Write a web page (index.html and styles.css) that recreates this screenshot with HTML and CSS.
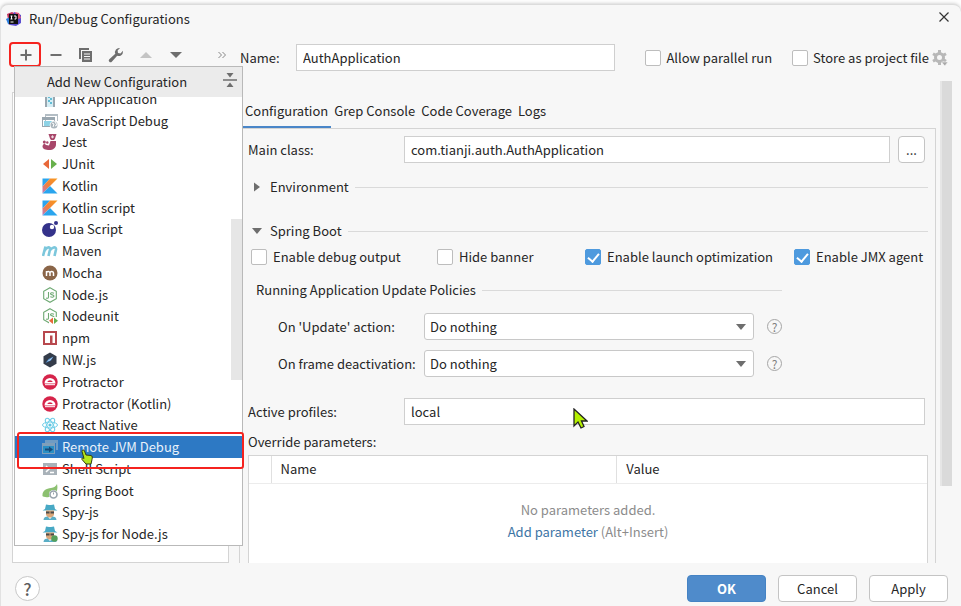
FILE: index.html
```html
<!DOCTYPE html>
<html lang="en">
<head>
<meta charset="utf-8">
<title>Run/Debug Configurations</title>
<link rel="stylesheet" href="styles.css">
</head>
<body>
<div class="dialog">
  <header class="titlebar">
    <svg class="logo" viewBox="0 0 16 16" width="16" height="16" aria-hidden="true">
      <path d="M1 3l5-2 4 2-2 8-5 3z" fill="#c4325e"/><path d="M0 8l4-2 2 8-4-1z" fill="#2b7de0"/><path d="M8 1l7 3v8l-5 3-6-1z" fill="#5a4fd0"/><path d="M9 1l4 1 2 5-3 1z" fill="#e2557a"/>
      <rect x="3" y="3" width="9" height="10" fill="#111"/><path d="M4.500 5h2M5.500 5v3M4.500 8h2M8 5h2v3h-1.500M4.500 11h3" stroke="#fff" stroke-width="1" fill="none"/>
    </svg>
    <h1>Run/Debug Configurations</h1>
    <button class="icon-button close" aria-label="Close"><svg viewBox="0 0 12 12" width="12" height="12"><path d="M1.500 1.500l9 9M10.500 1.500l-9 9" stroke="#333" stroke-width="1.200"/></svg></button>
  </header>

  <main class="workspace">
    <aside class="sidebar">
      <div class="toolbar">
        <div class="tools">
          <button class="icon-button marked" aria-label="Add"><svg viewBox="0 0 16 16" width="16" height="16"><path d="M8 2.500v11M2.500 8h11" stroke="#6e6e6e" stroke-width="2"/></svg></button>
          <button class="icon-button" aria-label="Remove"><svg viewBox="0 0 16 16" width="16" height="16"><path d="M2.500 8h11" stroke="#6e6e6e" stroke-width="2"/></svg></button>
          <button class="icon-button" aria-label="Copy"><svg viewBox="0 0 16 16" width="16" height="16"><path d="M1 1h10v2H3v9H1z" fill="#6e6e6e"/><path d="M4 4h10v11H4z" fill="#6e6e6e"/><path d="M6 7h6M6 9.500h6M6 12h6" stroke="#f7f7f7"/></svg></button>
          <button class="icon-button" aria-label="Edit templates"><svg viewBox="0 0 16 16" width="16" height="16"><path d="M15 4.500a4.300 4.300 0 0 1-5.800 4.200L3.800 14.700a1.700 1.700 0 0 1-2.500-2.500L7.300 6.800A4.300 4.300 0 0 1 12 1L9.600 3.500l.4 2.500 2.500.4L15 3.700z" fill="#6e6e6e"/></svg></button>
          <button class="icon-button" aria-label="Move up" disabled><svg viewBox="0 0 16 16" width="16" height="16"><path d="M2 11l6-6 6 6z" fill="#c4c4c4"/></svg></button>
          <button class="icon-button" aria-label="Move down"><svg viewBox="0 0 16 16" width="16" height="16"><path d="M2 5h12l-6 6z" fill="#6e6e6e"/></svg></button>
        </div>
        <button class="icon-button" aria-label="More"><svg viewBox="0 0 10 10" width="10" height="10"><path d="M1.500 2l3 3-3 3M5.500 2l3 3-3 3" stroke="#888" fill="none"/></svg></button>
      </div>
      <div class="tree"></div>

      <div class="popup">
        <div class="popup-head">
          <h2>Add New Configuration</h2>
          <button class="icon-button" aria-label="Collapse"><svg viewBox="0 0 14 14" width="14" height="14"><path d="M0 7h14" stroke="#6e6e6e" stroke-width="1.500"/><path d="M3.500 0h7L7 4.500zM3.500 14h7L7 9.500z" fill="#6e6e6e"/></svg></button>
        </div>
        <div class="popup-body">
          <ul>
            <li><svg viewBox="0 0 16 16"><path d="M3 0h10v16H3z" fill="#9aa7b0"/><path d="M5 0h6v16H5z" fill="#d5eef5"/><path d="M6 1h2v2H6zM8 3h2v2H8zM6 5h2v2H6zM8 7h2v2H8zM6 9h2v2H6zM8 11h2v2H8z" fill="#62bdd6"/></svg>JAR Application</li>
            <li><svg viewBox="0 0 16 16"><path d="M3 1h13v7h-1V3H4v7H3z" fill="#b3bdc4"/><path d="M0 4h13v4h-1V7H1v6h7v1H0z" fill="#9aa7b0"/><path d="M2 8h10v5H2z" fill="#8ed3e6"/><circle cx="12" cy="12" r="4.300" fill="#fff"/><circle cx="12" cy="12" r="3.500" fill="#aab5bc"/><path d="M10 10l2 1-1 3M13 9l2 3-2 1" stroke="#fff" fill="none"/></svg>JavaScript Debug</li>
            <li><svg viewBox="0 0 16 16"><path d="M6.500 0h8l-1.500 4.500-1 1.500h-3L8 4.500z" fill="#a8476a"/><path d="M9 3l1.500-2L12 3l-1.500 1.500z" fill="#fff" opacity=".8"/><path d="M8.500 7H14v3.500c0 3.500-3 5.500-6.500 5.500C3.500 16 .5 15 .5 12.500c0-1.500 1-2.500 2-3l1.500 1.500 3 .5z" fill="#a8476a"/><circle cx="2.300" cy="8" r="1.500" fill="#a8476a"/><circle cx="5.300" cy="8.500" r="1.200" fill="#a8476a"/></svg>Jest</li>
            <li><svg viewBox="0 0 16 16"><path d="M7 3v10L1 8z" fill="#e8683a"/><path d="M9 3v10l6-5z" fill="#68b04c"/></svg>JUnit</li>
            <li><svg viewBox="0 0 16 16"><use href="#kotlin"/></svg>Kotlin</li>
            <li><svg viewBox="0 0 16 16"><use href="#kotlin"/></svg>Kotlin script</li>
            <li><svg viewBox="0 0 16 16"><circle cx="7" cy="9" r="7" fill="#34328a"/><circle cx="10" cy="6" r="2.200" fill="#fff"/><circle cx="14" cy="2" r="2" fill="#34328a"/></svg>Lua Script</li>
            <li><svg viewBox="0 0 16 16"><path d="M1 13L3.500 3.500M2.500 8C4 4 8.500 3 8 6.500L6.500 13M7.500 8C9.500 4 14.500 3 14 6.500L12.500 13" stroke="#7cc7dc" stroke-width="2.600" fill="none"/></svg>Maven</li>
            <li><svg viewBox="0 0 16 16"><circle cx="8" cy="8" r="7.500" fill="#8a6548"/><path d="M4.500 11V6M4.500 7.500c.5-1.500 3.500-1.500 3.500.5v3M8 7.500c.5-1.500 3.500-1.500 3.500.5v3" stroke="#fff" stroke-width="1.500" fill="none"/></svg>Mocha</li>
            <li><svg viewBox="0 0 16 16"><use href="#node"/></svg>Node.js</li>
            <li><svg viewBox="0 0 16 16"><use href="#node"/><path d="M7 9h9v7H7z" fill="#fff"/><path d="M11 9.500v6.500L7 12.750z" fill="#e8683a"/><path d="M12 9.500v6.500l4-3.250z" fill="#68b04c"/></svg>Nodeunit</li>
            <li><svg viewBox="0 0 16 16"><path d="M2 2h12v12H2z" fill="#fff" stroke="#b8484e" stroke-width="2"/><path d="M8 5.500h2.500V13H8z" fill="#b8484e"/></svg>npm</li>
            <li><svg viewBox="0 0 16 16"><path d="M8 .5l6.500 3.700v7.600L8 15.500l-6.500-3.700V4.200z" fill="#343c4a"/><path d="M3.500 11l3-4 5-2.500-2.500 4z" fill="#4f8ccc"/><path d="M5 9.500l6-4.500-3 3.500z" fill="#d5e5f4"/></svg>NW.js</li>
            <li><svg viewBox="0 0 16 16"><use href="#protractor"/></svg>Protractor</li>
            <li><svg viewBox="0 0 16 16"><use href="#protractor"/></svg>Protractor (Kotlin)</li>
            <li><svg viewBox="0 0 16 16"><g fill="none" stroke="#74cfe8"><ellipse cx="8" cy="8" rx="7.500" ry="3"/><ellipse cx="8" cy="8" rx="7.500" ry="3" transform="rotate(60 8 8)"/><ellipse cx="8" cy="8" rx="7.500" ry="3" transform="rotate(120 8 8)"/></g><circle cx="8" cy="8" r="1.600" fill="#5cc4e0"/></svg>React Native</li>
            <li class="selected"><svg viewBox="0 0 16 16"><path d="M3 1h13v10h-2V4H3z" fill="#6f9cc4"/><path d="M0 4h13v11H0z" fill="#7f9fba"/><path d="M1 7h11v7H1z" fill="#2a8fc4"/><path d="M3 9.500h4V7.500l4 3-4 3v-2H3z" fill="#174a78"/></svg>Remote JVM Debug</li>
            <li><svg viewBox="0 0 16 16"><path d="M1 2h14v12H1z" fill="#a9b2b9"/><path d="M4 5l3 3-3 3M8 11.500h4" stroke="#fff" stroke-width="1.500" fill="none"/></svg>Shell Script</li>
            <li><svg viewBox="0 0 16 16"><path d="M15 1c1.500 6-1 12-8 13-3 .5-6 0-6.500-1C0 8 4 5.500 9 5c3-.3 5-2 6-4z" fill="#8cc070"/><circle cx="11.500" cy="11.500" r="4.500" fill="#fff"/><circle cx="11.500" cy="11.500" r="3.500" fill="none" stroke="#98a4ad" stroke-width="1.600"/><path d="M11.500 9.500v2" stroke="#98a4ad"/></svg>Spring Boot</li>
            <li><svg viewBox="0 0 16 16"><use href="#spy"/></svg>Spy-js</li>
            <li><svg viewBox="0 0 16 16"><use href="#spy"/><circle cx="12.500" cy="12.500" r="3.200" fill="#56a05a"/></svg>Spy-js for Node.js</li>
          </ul>
          <div class="popup-thumb"></div>
        </div>
        <div class="mark-selection"></div>
        <svg class="hand" viewBox="0 0 12 16" width="12" height="16" aria-hidden="true"><path d="M1 2.500c0-2 2-2 2.500-.5L5 6l5 .5c1.500.5 1.500 2 1 4L10 15H5L1 10.500c-.5-1.500.5-2 2-1z" fill="#b4e61e" stroke="#333d10"/></svg>
      </div>
    </aside>

    <section class="editor">
      <div class="name-row">
        <label for="name">Name:</label>
        <input type="text" id="name" class="field" value="AuthApplication">
        <label class="check"><input type="checkbox">Allow parallel run</label>
        <label class="check store"><input type="checkbox">Store as project file</label>
        <button class="icon-button gear" aria-label="Storage options"><svg viewBox="0 0 16 16" width="16" height="16"><circle cx="7.500" cy="7.500" r="4" fill="none" stroke="#b8b8b8" stroke-width="3"/><path d="M7.500 0v3M7.500 12v3M1 3.800l2.600 1.500M11.400 9.800L14 11.300M1 11.200l2.600-1.500M11.400 5.200L14 3.700" stroke="#b8b8b8" stroke-width="3"/><path d="M9.500 12h6.500l-3.200 4z" fill="#a8a8a8" stroke="#f7f7f7" stroke-width=".6"/></svg></button>
      </div>

      <div class="scroll">
        <div class="scroll-content">
          <nav class="tabs" role="tablist">
            <button role="tab" aria-selected="true">Configuration</button>
            <button role="tab">Grep Console</button>
            <button role="tab">Code Coverage</button>
            <button role="tab">Logs</button>
          </nav>
          <div class="pane">
            <div class="form-row">
              <label for="main">Main class:</label>
              <input type="text" id="main" class="field" value="com.tianji.auth.AuthApplication">
              <button class="button browse" aria-label="Browse">...</button>
            </div>
            <div class="section environment"><svg viewBox="0 0 10 10" width="10" height="10"><path d="M2 .5v9L8 5z" fill="#6e6e6e"/></svg><span>Environment</span></div>
            <div class="section spring"><svg viewBox="0 0 10 10" width="10" height="10"><path d="M0 2h10L5 8z" fill="#6e6e6e"/></svg><span>Spring Boot</span></div>
            <div class="checks">
              <label class="check"><input type="checkbox">Enable debug output</label>
              <label class="check"><input type="checkbox">Hide banner</label>
              <label class="check"><input type="checkbox" checked>Enable launch optimization</label>
              <label class="check"><input type="checkbox" checked>Enable JMX agent</label>
            </div>
            <div class="section policies-head"><span>Running Application Update Policies</span></div>
            <div class="policies">
              <div class="policy">
                <label for="update">On 'Update' action:</label>
                <span class="combo"><select id="update"><option>Do nothing</option></select></span>
                <button class="hint" aria-label="Help on update action">?</button>
              </div>
              <div class="policy">
                <label for="frame">On frame deactivation:</label>
                <span class="combo"><select id="frame"><option>Do nothing</option></select></span>
                <button class="hint" aria-label="Help on frame deactivation">?</button>
              </div>
            </div>
            <div class="form-row profiles">
              <label for="profiles">Active profiles:</label>
              <input type="text" id="profiles" class="field" value="local">
              <svg class="arrow" viewBox="0 0 15 21" width="15" height="21" aria-hidden="true"><path d="M1 1v17l4-4 3 6 3-1.500L8.500 13H14z" fill="#b4f000" stroke="#222" stroke-width="1.300"/></svg>
            </div>
            <div class="override" id="override">Override parameters:</div>
            <div class="params">
              <table aria-labelledby="override">
                <thead><tr><th class="tick"></th><th class="name">Name</th><th>Value</th></tr></thead>
                <tbody><tr><td colspan="3">No parameters added.<br><a href="#">Add parameter</a> (Alt+Insert)</td></tr></tbody>
              </table>
            </div>
          </div>
        </div>
        <div class="scrollbar"><div class="thumb"></div></div>
      </div>
    </section>
  </main>

  <footer class="footer">
    <button class="help" aria-label="Help">?</button>
    <button class="button primary">OK</button>
    <button class="button">Cancel</button>
    <button class="button">Apply</button>
  </footer>
</div>

<svg class="defs" width="0" height="0" aria-hidden="true">
  <defs>
    <linearGradient id="kg" x1="0" y1="1" x2="1" y2="0"><stop offset="0" stop-color="#b978c8"/><stop offset=".45" stop-color="#f0803c"/><stop offset="1" stop-color="#f99a1c"/></linearGradient>
    <g id="kotlin"><path d="M.5.500H8L.5 8.500z" fill="#2aa5ee"/><path d="M8 .5h7.500L.5 15.500v-7z" fill="url(#kg)"/><path d="M.5 15.500L8 8l7.500 7.500z" fill="#2aa5ee"/></g>
    <g id="node" fill="none" stroke="#6ea973" stroke-width="1.100"><path d="M8 .7l6.300 3.700v7.200L8 15.300l-6.300-3.700V4.400z"/><path d="M6.500 5v5c0 1.500-1 1.500-2.500 1M12 6.200c-1.500-.7-3.500-.5-3.500.6 0 1.500 3.500.7 3.500 2.300 0 1.300-2.500 1.400-3.700.5"/></g>
    <g id="protractor"><circle cx="8" cy="8" r="7.700" fill="#d6244a"/><path d="M2.500 9.500a5.500 5.500 0 0 1 11 0z" fill="#fff"/><path d="M5.200 8a3 2.600 0 0 1 5.600 0z" fill="#d6244a"/><path d="M3 10.700h10" stroke="#fff"/></g>
    <g id="spy"><path d="M3 5l1-4.500 3 .5h2l3-.5L13 5l2.500 1.500H.5z" fill="#48a9c5"/><path d="M4 6.500h8V11l-2 2.500H6L4 11z" fill="#d9a679"/><path d="M4 7.500h3.500v2H4zM8.500 7.500H12v2H8.500z" fill="#4b4b4b"/><path d="M1.500 16c0-2.500 2-3.500 4-3.500L8 15l2.500-2.500c2 0 4 1 4 3.500z" fill="#5aaec6"/></g>
  </defs>
</svg>
</body>
</html>
```
FILE: styles.css
```css
* { box-sizing: border-box; }

body {
  margin: 0;
  background: #fdfdfd;
  color: #262626;
  font: 13px/20px "Noto Sans CJK SC", "Noto Sans", sans-serif;
}

h1, h2 { margin: 0; font-size: inherit; font-weight: 400; }
button, input, select { font: inherit; color: inherit; }
.defs { position: absolute; }

.dialog {
  display: flex;
  flex-direction: column;
  height: calc(100vh - 4px);
  margin-top: 4px;
  border-top: 1px solid #dcdcdc;
  border-left: 1px solid #e2e2e2;
  border-radius: 8px 8px 0 0;
  background: #f7f7f7;
  box-shadow: 0 -1px 3px #d8d8d8;
}

.icon-button {
  display: flex;
  align-items: center;
  justify-content: center;
  padding: 0;
  border: 0;
  background: none;
}

/* Title bar */
.titlebar {
  display: flex;
  align-items: center;
  flex: none;
  gap: 7px;
  height: 28px;
  padding: 0 11px 0 5px;
}
.close { margin-left: auto; align-self: flex-start; height: 24px; }

/* Left column */
.workspace { display: flex; flex: 1; min-height: 0; }
.sidebar {
  position: relative;
  display: flex;
  flex: none;
  flex-direction: column;
  width: 239px;
  padding: 10px 10px 0 11px;
  border-right: 1px solid #d4d4d4;
  border-image: linear-gradient(transparent 20%, #d4d4d4 20%) 1;
  border-width: 0 1px 0 0;
}
.toolbar { display: flex; justify-content: space-between; margin: 0 2px 0 -2px; }
.tools { display: flex; justify-content: space-between; width: 180px; }
.tools .icon-button { width: 31px; height: 23px; padding-left: 2px; }
.toolbar .icon-button { height: 23px; }
.tools .marked { outline: 2px solid #f5231f; outline-offset: -1px; border-radius: 3px; }
.tree { flex: 1; margin-top: 26px; border: 1px solid #d4d4d4; background: #fff; }

/* Popup list */
.popup {
  position: absolute;
  z-index: 2;
  top: 33px;
  left: 13px;
  width: 229px;
  border: 1px solid #b9b9b9;
  background: #fff;
}
.popup-head {
  display: flex;
  align-items: center;
  height: 30px;
  padding-right: 5px;
  background: #ebebeb;
}
.popup-head h2 { flex: 1; padding-right: 4px; text-align: center; }
.popup-head .icon-button { align-self: flex-start; height: 26px; }
.popup-body {
  position: relative;
  display: flex;
  align-items: flex-end;
  height: 448px;
  overflow: hidden;
}
.popup ul {
  display: grid;
  flex: 1;
  grid-auto-rows: 1fr;
  height: 457px;
  margin: 0;
  padding: 0;
  list-style: none;
}
.popup li { display: flex; align-items: center; gap: 4px; padding-left: 27px; }
.popup li svg { flex: none; width: 16px; height: 16px; }
.popup .selected { background: #2d79c4; color: #e8f1fa; }
.popup-thumb {
  position: absolute;
  top: 122px;
  right: 0;
  width: 11px;
  height: 161px;
  background: #e6e6e6;
}
.mark-selection {
  position: absolute;
  top: 365px;
  left: 2px;
  width: 227px;
  height: 37px;
  border: 2px solid #f5231f;
  border-radius: 3px;
}
.hand { position: absolute; top: 382px; left: 66px; }

/* Right column */
.editor { display: flex; flex: 1; flex-direction: column; min-width: 0; padding-top: 11px; }
.name-row { display: flex; align-items: center; flex: none; height: 27px; padding-right: 13px; }
.name-row > label:first-child { width: 56px; }
.field {
  flex: 1;
  min-width: 0;
  height: 27px;
  padding: 0 6px;
  border: 1px solid #cfcfcf;
  background: #fff;
  outline: 0;
}
.check { display: flex; align-items: center; gap: 6px; white-space: nowrap; }
.name-row .check { margin-left: 30px; gap: 5px; }
.name-row .store { margin-left: 20px; }
.name-row .gear { margin-left: 3px; }
.check input {
  display: flex;
  flex: none;
  align-items: center;
  justify-content: center;
  width: 16px;
  height: 16px;
  margin: 0;
  border: 1px solid #bdbdbd;
  border-radius: 2px;
  background: #fff;
  appearance: none;
}
.check input:checked { border-color: #4e9ade; background: #4e9ade; }
.check input:checked::before {
  content: "";
  width: 5px;
  height: 9px;
  margin-bottom: 2px;
  border: solid #fff;
  border-width: 0 2px 2px 0;
  transform: rotate(40deg);
}

.scroll { display: flex; flex: 1; gap: 4px; min-height: 0; margin-top: 10px; padding-right: 9px; overflow: hidden; }
.scroll-content { display: flex; flex: 1; flex-direction: column; min-width: 0; padding-top: 17px; }
.scrollbar { width: 12px; }
.thumb { height: 84%; border-left: 2px solid #e6e6e6; background: #dadada; }

.tabs { display: flex; flex: none; height: 31px; margin-bottom: -1px; padding-left: 2px; }
.tabs button {
  padding: 0 3px 2px;
  border: 0;
  border-bottom: 3px solid transparent;
  background: none;
}
.tabs [aria-selected="true"] { border-color: #4a86c8; }

.pane {
  display: flex;
  flex: 1;
  flex-direction: column;
  min-height: 0;
  padding: 7px 7px 0 8px;
  border: solid #d4d4d4;
  border-width: 1px 1px 0 0;
}
.form-row { display: flex; flex: none; align-items: center; padding-right: 3px; }
.form-row label { width: 156px; }
.button {
  height: 27px;
  padding: 0;
  border: 1px solid #c4c4c4;
  border-radius: 4px;
  background: #fff;
}
.browse { width: 27px; margin-left: 8px; }

.section { display: flex; flex: none; align-items: center; height: 20px; }
.section svg { margin: 0 8px 0 4px; }
.section::after { content: ""; flex: 1; height: 1px; margin-left: 6px; background: #dadada; }
.environment { margin-top: 14px; }
.spring { margin-top: 24px; }
.checks {
  display: grid;
  flex: none;
  grid-template-columns: 186fr 148fr 209fr 134fr;
  height: 18px;
  margin-top: 6px;
  padding-left: 3px;
}
.policies-head { margin: 15px 146px 13px 8px; }
.policies {
  display: flex;
  flex: none;
  flex-direction: column;
  gap: 10px;
  padding: 0 146px 0 8px;
}
.policy { display: flex; align-items: center; padding-left: 22px; }
.policy label { flex: none; width: 146px; white-space: nowrap; }
.combo { position: relative; display: flex; flex: 1; }
.combo select {
  flex: 1;
  height: 27px;
  padding: 0 5px;
  border: 1px solid #c8c8c8;
  border-radius: 3px;
  background: #fff;
  appearance: none;
}
.combo::after {
  content: "";
  position: absolute;
  top: 11px;
  right: 8px;
  border: 5px solid transparent;
  border-top: 6px solid #6e6e6e;
  border-bottom: 0;
}
.hint {
  width: 15px;
  height: 15px;
  margin-left: 13px;
  padding: 0;
  border: 1px solid #a6a6a6;
  border-radius: 50%;
  background: none;
  color: #808080;
  font-size: 12px;
  line-height: 13px;
}
.profiles { position: relative; margin-top: 21px; }
.arrow { position: absolute; top: 10px; left: 325px; }
.override { flex: none; margin-top: 7px; }
.params { flex: 1; min-height: 0; margin-top: 3px; border: solid #d4d4d4; border-width: 1px 1px 0; background: #fff; overflow: hidden; }
table { width: 100%; border-collapse: collapse; table-layout: fixed; }
th { height: 27px; padding: 0 9px; border-bottom: 1px solid #ececec; font-weight: 400; text-align: left; }
th + th { border-left: 1px solid #e0e0e0; }
.tick { width: 22px; }
.name { width: 51%; }
td { padding: 15px 0 0; color: #8c8c8c; line-height: 22px; text-align: center; }
a { color: #3d75a5; text-decoration: none; }

/* Footer */
.footer { display: flex; flex: none; align-items: center; gap: 12px; height: 43px; padding: 8px 13px 0 14px; }
.footer .button { width: 79px; }
.footer .primary { border-color: #4583c4; background: #4f8bcb; color: #fff; font-weight: 700; }
.help {
  width: 25px;
  height: 25px;
  margin-right: auto;
  padding: 0;
  border: 1px solid #c8c8c8;
  border-radius: 50%;
  background: #fff;
  color: #5e5e5e;
  font-size: 17px;
  font-weight: 500;
  line-height: 22px;
}
```
